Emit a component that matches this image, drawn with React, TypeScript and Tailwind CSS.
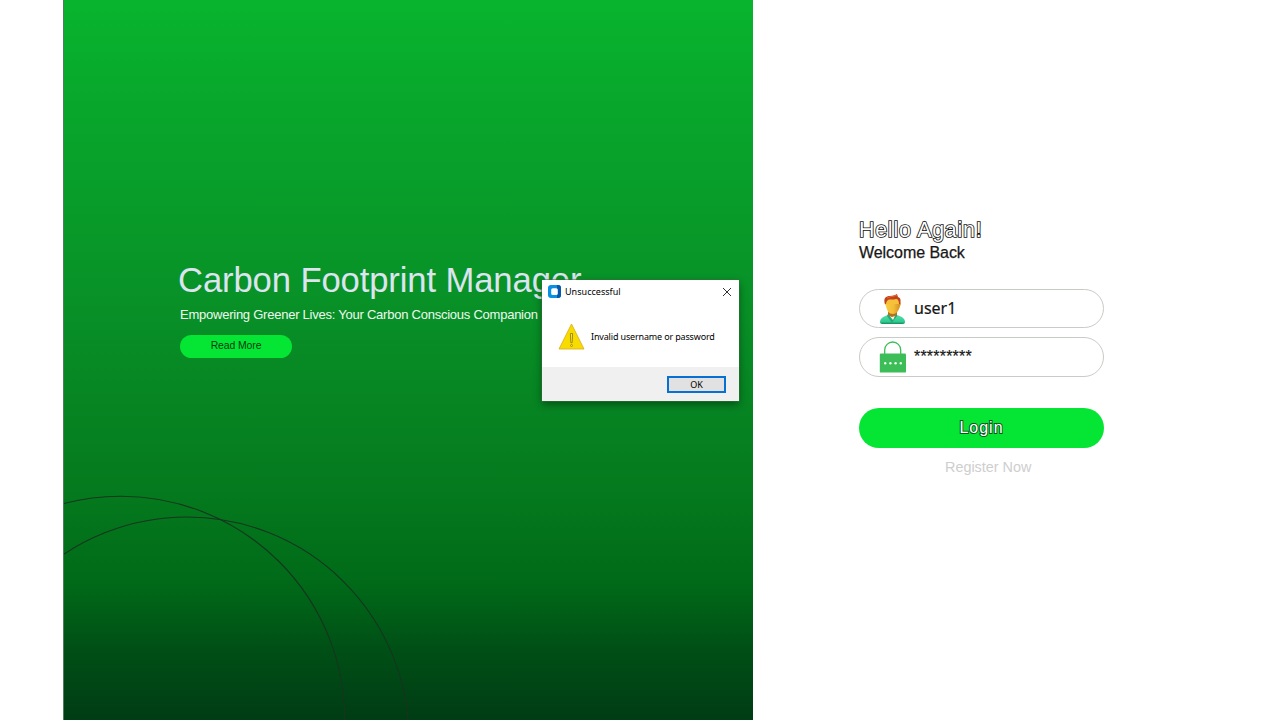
import React from 'react';

function UserIcon() {
  return (
    <svg className="h-8 w-7 shrink-0" viewBox="0 0 28 32">
      <defs>
        <linearGradient id="face" x1="0" x2="1">
          <stop offset="0" stopColor="#f9cf45" />
          <stop offset="0.55" stopColor="#f3bd35" />
          <stop offset="1" stopColor="#cf8a20" />
        </linearGradient>
        <linearGradient id="shirt" x1="0" x2="0" y1="0" y2="1">
          <stop offset="0" stopColor="#52dfa6" />
          <stop offset="0.75" stopColor="#30ca91" />
          <stop offset="1" stopColor="#128858" />
        </linearGradient>
      </defs>
      <path d="M1 29c0-3 2-5 8-7h9c6 2 8 4 8 7 0 1-1 2-2 2H3c-1 0-2-1-2-2z" fill="url(#shirt)" />
      <path d="M9 18h9v5l-3 3h-2l-4-4z" fill="#b9701c" />
      <path d="M10 23l3 1 3-1-1 4-2 1z" fill="#fff3dc" />
      <path d="M9 21l-1 2 5 7 5-7-1-2-3 6z" fill="#25aa78" />
      <path d="M6 9h15c1 0 1 3 0 4-1 5-4 8-7 8-4 0-6-3-7-8-1-1-2-3-1-4z" fill="url(#face)" />
      <path d="M7 8c2-2 5-2 8-2 2-1 4 0 5 2v3H7z" fill="#f5c13b" />
      <path d="M6 11C4 5 7 3 11 3c3 0 5-1 7-2l1 3c3 1 3 4 2 7h-1c0-3-1-5-3-5-3 1-6 0-8 1-1 1-2 2-2 4z" fill="#c2431a" />
      <path d="M8 5c4-2 6-1 10-3" stroke="#e9672e" fill="none" />
    </svg>
  );
}

function LockIcon() {
  return (
    <svg className="h-8 w-7 shrink-0" viewBox="0 0 28 32">
      <path d="M5.7 13V9a8 8 0 0 1 16 0v4" fill="none" stroke="#3dbd58" strokeWidth="1.3" />
      <rect x="0.8" y="12.6" width="26.2" height="19" rx="1.2" fill="#3dbd58" />
      <g fill="#ecfff0">
        <circle cx="6.2" cy="22.3" r="1.2" />
        <circle cx="11.4" cy="22.3" r="1.2" />
        <circle cx="16.6" cy="22.3" r="1.2" />
        <circle cx="21.8" cy="22.3" r="1.2" />
      </g>
    </svg>
  );
}

function Dialog() {
  return (
    <div
      role="alertdialog"
      className="absolute left-[542px] top-[280px] flex h-[121px] w-[197px] flex-col bg-white font-['Noto_Sans',sans-serif] text-[9px] text-black shadow-[0_0_0_0.5px_#38713f,0_3px_8px_rgba(0,0,0,0.42)]"
    >
      <div className="flex h-[23px] shrink-0 items-center pl-[6px] pr-[7px]">
        <svg className="mr-[4px] h-[13px] w-[13px]" viewBox="0 0 13 13">
          <rect width="13" height="13" rx="3" fill="#0990e0" />
          <path d="M9 0h1a3 3 0 0 1 3 3v7a3 3 0 0 1-3 3H9z" fill="#0757ab" />
          <rect x="3.2" y="3.2" width="6.6" height="6.8" rx="1.6" fill="white" />
        </svg>
        <span className="grow tracking-[0.03px]">Unsuccessful</span>
        <svg className="h-[10px] w-[10px]" viewBox="0 0 10 10">
          <path d="M1 1l8 8M9 1L1 9" stroke="#333" strokeWidth="1" />
        </svg>
      </div>
      <div className="flex grow items-center pl-[16px] pt-[2px]">
        <svg className="mr-[6px] h-[27px] w-[27px] shrink-0" viewBox="0 0 27 27">
          <path d="M13.5 1L26 26H1z" fill="#f8dc00" stroke="#d8a91c" strokeWidth="0.8" />
          <path d="M12.4 10.5h2.2l-.4 9.2h-1.4z" fill="#f8e34b" stroke="#7d6b00" strokeWidth="0.7" />
          <circle cx="13.5" cy="22.5" r="1" fill="#f8e34b" stroke="#7d6b00" strokeWidth="0.6" />
        </svg>
        <span className="whitespace-nowrap pt-px tracking-[-0.16px]">Invalid username or password</span>
      </div>
      <div className="flex h-[34px] shrink-0 items-center justify-end bg-[#f0f0f0] pr-[13px]">
        <button className="flex h-[17px] w-[59px] items-center justify-center border-2 border-[#0870d3] bg-[#e1e1e1] pt-px text-[9px]">OK</button>
      </div>
    </div>
  );
}

export default function App() {
  return (
    <div className="relative flex h-[720px] w-[1280px] overflow-hidden bg-white pl-[63px] font-['Liberation_Sans',Arial,sans-serif]">
      <section className="relative flex w-[690px] shrink-0 flex-col items-start overflow-hidden border-l border-[#557b5d] bg-linear-[180deg,#08b42e_0%,#08a42b_18%,#089027_43%,#057a1e_68%,#006a18_81%,#005016_90%,#003c14_100%] pl-[114px] pt-[260px]">
        <svg className="absolute inset-0 h-full w-full" viewBox="0 0 689 720">
          <g fill="none" stroke="#17351f" strokeWidth="1.1">
            <circle cx="57" cy="720" r="223.8" />
            <circle cx="123" cy="739" r="222" />
          </g>
        </svg>
        <h1 className="whitespace-nowrap text-[34.67px] leading-[41px] tracking-[-0.13px] text-[#dce4ef]">Carbon Footprint Manager</h1>
        <p className="ml-[2px] mt-[5px] whitespace-nowrap text-[13px] leading-[18px] tracking-[-0.24px] text-[#eefaf0]">Empowering Greener Lives: Your Carbon Conscious Companion</p>
        <button className="ml-[2px] mt-[11px] flex h-[23px] w-[112px] items-center justify-center rounded-full bg-[#05e534] pb-px text-[10.4px] tracking-[-0.08px] text-[#063b14]">Read More</button>
      </section>
      <section className="flex flex-col pl-[106px] pt-[217px]">
        <h2 className="h-[26px] whitespace-nowrap text-[21.33px] leading-[26px] tracking-[0.8px] text-white [paint-order:stroke_fill] [-webkit-text-stroke:1.7px_#111]">Hello Again!</h2>
        <p className="h-[20px] whitespace-nowrap text-[16px] leading-[20px] tracking-[-0.05px] text-[#171717] [-webkit-text-stroke:0.25px_#171717]">Welcome Back</p>
        <div className="mt-[26px] flex h-[39px] w-[245px] items-center rounded-full border-[1.5px] border-[#c8ccc6] bg-white pl-[19px]">
          <UserIcon />
          <span className="ml-[7px] pb-[2px] font-['Noto_Sans',sans-serif] text-[16px] leading-[20px] text-[#161616] [-webkit-text-stroke:0.2px_#161616]">user1</span>
        </div>
        <div className="mt-[9px] flex h-[40px] w-[245px] items-center rounded-full border-[1.5px] border-[#c8ccc6] bg-white pl-[19px]">
          <LockIcon />
          <span className="ml-[7px] text-[16px] leading-[20px] tracking-[0.2px] text-[#161616] [-webkit-text-stroke:0.2px_#161616]">*********</span>
        </div>
        <button className="mt-[31px] flex h-[40px] w-[245px] items-center justify-center rounded-full bg-[#05e534] pb-px text-[16px] tracking-[1px] text-white [paint-order:stroke_fill] [-webkit-text-stroke:2px_#075a1b]">Login</button>
        <a className="ml-[86px] mt-[9px] whitespace-nowrap text-[14.4px] leading-[20px] text-[#cecece]">Register Now</a>
      </section>
      <Dialog />
    </div>
  );
}
